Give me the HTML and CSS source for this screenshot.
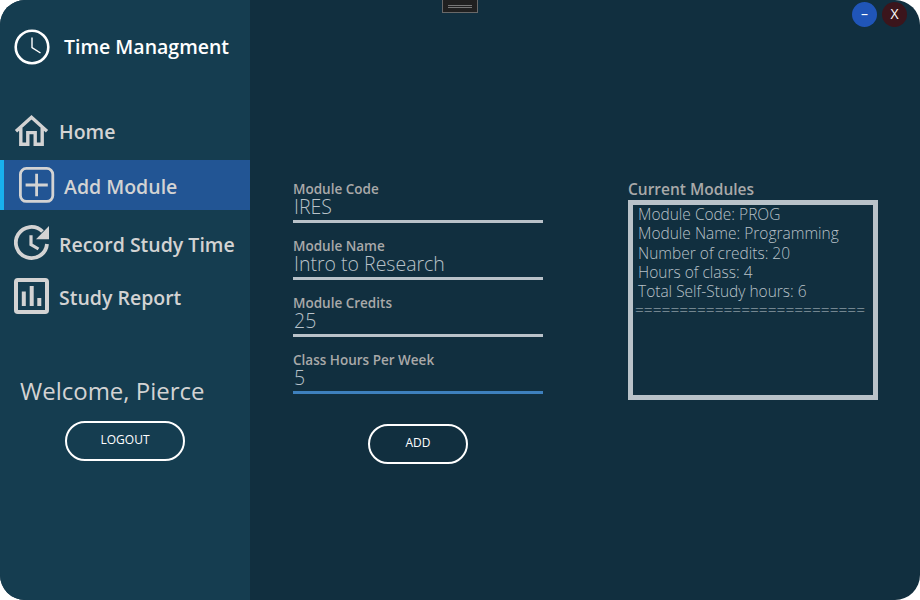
FILE: index.html
```html
<!DOCTYPE html>
<html lang="en">
<head>
<meta charset="utf-8">
<title>Time Managment</title>
<link rel="stylesheet" href="styles.css">
</head>
<body>
<div class="window">
  <aside class="sidebar">
    <header class="brand">
      <svg class="icon" viewBox="0 0 36 36" fill="none" stroke="#fff"><circle cx="18" cy="18" r="16.3" stroke-width="2.6"/><path d="M18 8.5V18.5L26.5 24" stroke-width="1.4"/></svg>
      <span class="brand-name">Time Managment</span>
    </header>
    <nav class="nav">
      <a class="nav-item home">
        <svg class="icon" viewBox="0 0 36 36" fill="none" stroke="#d3d3d3" stroke-width="3.4"><path d="M2 18.2L17.5 4.2L33 18.2M6.8 15V31.3H13.8V19.6H21.2V31.3H28.2V15"/></svg>
        <span class="nav-text t-home">Home</span>
      </a>
      <a class="nav-item active">
        <svg class="icon" viewBox="0 0 36 36" fill="none" stroke="#d3d3d3"><rect x="1.4" y="1.4" width="32.4" height="33" rx="6" stroke-width="2.8"/><path d="M17.6 6.8V29.3M6.6 18H28.8" stroke-width="2.8"/></svg>
        <span class="nav-text t-add">Add Module</span>
      </a>
      <a class="nav-item record">
        <svg class="icon" viewBox="0 0 36 36" fill="none" stroke="#d3d3d3"><path d="M28.5 6.5A15.6 15.6 0 1 0 33 19" stroke-width="3.8"/><path d="M35 1V14.3H22Z" fill="#d3d3d3" stroke="none"/><path d="M17 10.3V19.5L24.5 24" stroke-width="3.2"/></svg>
        <span class="nav-text t-record">Record Study Time</span>
      </a>
      <a class="nav-item report">
        <svg class="icon" viewBox="0 0 36 36" fill="none" stroke="#d3d3d3" stroke-width="4"><rect x="2" y="2" width="31" height="32" rx="1.8"/><path d="M9.8 13.5V28M17.7 8V28M25.3 20V28"/></svg>
        <span class="nav-text t-report">Study Report</span>
      </a>
    </nav>
    <p class="welcome">Welcome, Pierce</p>
    <button class="pill logout"><span class="t-logout">LOGOUT</span></button>
  </aside>
  <main class="content">
    <form class="form">
      <label class="field"><span class="label l-code">Module Code</span><span class="value v-code">IRES</span></label>
      <label class="field"><span class="label l-name">Module Name</span><span class="value v-name">Intro to Research</span></label>
      <label class="field"><span class="label l-credits">Module Credits</span><span class="value v-num">25</span></label>
      <label class="field focused"><span class="label l-hours">Class Hours Per Week</span><span class="value v-num">5</span></label>
      <button type="button" class="pill add"><span class="t-addbtn">ADD</span></button>
    </form>
    <section class="modules">
      <h2 class="modules-title">Current Modules</h2>
      <div class="list">
        <div class="line m1">Module Code: PROG</div>
        <div class="line m2">Module Name: Programming</div>
        <div class="line m3">Number of credits: 20</div>
        <div class="line m4">Hours of class: 4</div>
        <div class="line m5">Total Self-Study hours: 6</div>
        <div class="line rule">==========================</div>
      </div>
    </section>
  </main>
  <div class="grip"><i></i><i></i></div>
  <div class="controls">
    <button class="control minimize">–</button>
    <button class="control close">X</button>
  </div>
</div>
</body>
</html>
```
FILE: styles.css
```css
* { box-sizing: border-box; }
body { margin: 0; background: #fff; font-family: "Open Sans", sans-serif; }
.window { position: relative; display: flex; width: 920px; height: 600px; overflow: hidden; border-radius: 25px; background: #112f3f; }
.sidebar { width: 250px; background: #153d50; color: #d3d3d3; }
.icon { display: block; flex: none; width: 36px; height: 36px; }
.brand { display: flex; align-items: center; gap: 14px; height: 93px; padding-left: 14px; color: #fff; }
.brand-name { font-size: 19.5px; font-weight: 600; white-space: nowrap; }
.nav { padding-top: 12px; }
.nav-item { display: flex; align-items: center; gap: 9px; height: 55px; padding-left: 14px; }
.home { padding-bottom: 1px; }
.home .icon { margin-bottom: 3px; }
.active { height: 50px; border-left: 4px solid #18b0ee; background: #225594; padding-left: 15px; }
.active .nav-text { padding-top: 4px; }
.record { margin-top: 8px; height: 50px; }
.record .nav-text { padding-top: 4px; }
.report .nav-text { padding-top: 4px; }
.nav-text { font-size: 19.5px; font-weight: 600; line-height: 28px; white-space: nowrap; }
.welcome { margin: 51px 0 0 20px; font-size: 24px; line-height: 34px; white-space: nowrap; }
.pill { display: flex; align-items: center; justify-content: center; height: 40px; padding: 0 0 3px; border: 2px solid #fff; border-radius: 20px; background: transparent; color: #fff; font: 12px "Open Sans", sans-serif; }
.logout { width: 120px; margin: 13px 0 0 65px; }
.content { display: flex; flex: 1; padding-left: 43px; }
.form { width: 250px; padding-top: 180px; }
.field { display: block; height: 57px; }
.label { display: block; height: 18px; font-size: 13.5px; font-weight: 600; line-height: 18px; color: #a9a9a9; white-space: nowrap; }
.value { display: block; height: 25px; padding-left: 1px; border-bottom: 3px solid #b9c2c9; font-size: 19.5px; font-weight: 300; line-height: 18px; color: #b9c2c9; white-space: nowrap; }
.focused .value { border-color: #3e80bd; }
.add { width: 100px; margin: 16px 0 0 75px; }
.modules { width: 250px; margin-left: 85px; padding-top: 178px; }
.modules-title { margin: 0; height: 22px; font-size: 15.5px; font-weight: 600; line-height: 22px; color: #a9a9a9; white-space: nowrap; }
.list { height: 200px; overflow: hidden; border: 5px solid #b9c2c9; color: #b9c2c9; font-size: 15.5px; font-weight: 300; line-height: 19.3px; }
.line { padding-left: 5px; white-space: nowrap; }
.rule { padding-left: 2px; }
.grip { position: absolute; top: -1px; left: 442px; display: flex; flex-direction: column; gap: 1px; width: 36px; height: 14px; padding: 5px; border: 1px solid #696969; background: #202020; }
.grip i { height: 1px; background: #777; }
.controls { position: absolute; top: 2px; left: 852px; display: flex; gap: 5px; }
.control { width: 25px; height: 25px; padding: 0 0 1px; border: 0; border-radius: 50%; color: #fff; font: 14px/22px "Open Sans", sans-serif; }
.minimize { background: #2055b8; }
.close { background: #3b151c; }
```
